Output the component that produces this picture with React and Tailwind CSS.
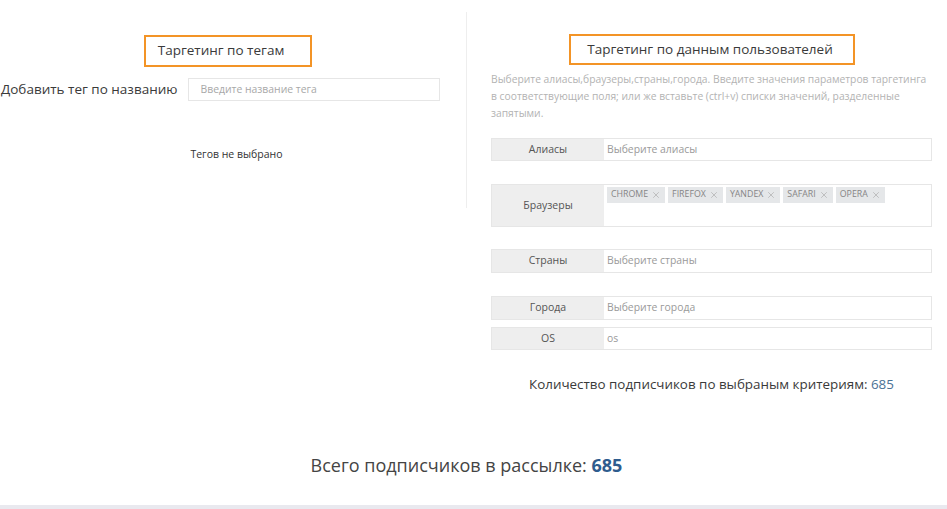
import { X } from "lucide-react";

const browsers = ["CHROME", "FIREFOX", "YANDEX", "SAFARI", "OPERA"];

function Row({ label, placeholder, className = "", children }) {
  return (
    <div className={`flex border border-[#e6e6e6] ${className}`}>
      <div className="flex w-[112px] shrink-0 items-center justify-center bg-[#eeeeee] text-[10.5px] text-[#555]">
        {label}
      </div>
      <div className="flex-1 bg-white">
        {children ?? (
          <div className="flex h-full items-center px-[3px] text-[10.4px] text-[#9a9a9a]">{placeholder}</div>
        )}
      </div>
    </div>
  );
}

export default function App() {
  return (
    <div className="relative h-[509px] w-[947px] overflow-hidden bg-white font-['Open_Sans',sans-serif] text-[#333]">
      <div className="flex">
        <div className="w-[467px] shrink-0 pt-[12px]">
          <div className="h-[196px] border-r border-[#eeeeee]">
            <div className="flex justify-center pr-[10px] pt-[23px]">
              <div className="h-[32px] border-2 border-[#f39426] pl-[12px] pr-[26px] text-[13.5px] leading-[27px] text-[#3a3a3a]">
                Таргетинг по тегам
              </div>
            </div>
            <div className="mt-[11px] flex items-center">
              <span className="pl-[1px] text-[13.5px] text-[#3a3a3a]">Добавить тег по названию</span>
              <div className="ml-[11px] flex h-[23px] w-[252px] items-center border border-[#e6e6e6] px-[11px] text-[10.4px] text-[#a8a8a8]">
                Введите название тега
              </div>
            </div>
            <div className="mt-[46px] pl-[7px] text-center text-[10.5px] text-[#333]">Тегов не выбрано</div>
          </div>
        </div>

        <div className="flex-1 pl-[24px] pr-[15px] pt-[34px]">
          <div className="flex justify-center pl-[1px]">
            <div className="h-[31px] border-2 border-[#f39426] pl-[16px] pr-[20px] text-[13.5px] leading-[26px] text-[#3a3a3a]">
              Таргетинг по данным пользователей
            </div>
          </div>
          <p className="mt-[6px] text-[10.3px] leading-[17px] text-[#b3b3b3]">
            Выберите алиасы,браузеры,страны,города. Введите значения параметров таргетинга в соответствующие поля; или же вставьте (ctrl+v) списки значений, разделенные запятыми.
          </p>
          <Row label="Алиасы" placeholder="Выберите алиасы" className="mt-[16px] h-[23px]" />
          <Row label="Браузеры" className="mt-[23px] h-[43px]">
            <div className="flex gap-[3px] pl-[3px] pt-[2px]">
              {browsers.map((b) => (
                <span
                  key={b}
                  className="flex h-[16px] items-center gap-[3px] bg-[#e5e7e9] px-[4px] text-[8.8px] text-[#858585]"
                >
                  {b}
                  <X className="h-[10px] w-[10px] text-[#ababab]" strokeWidth={1.6} />
                </span>
              ))}
            </div>
          </Row>
          <Row label="Страны" placeholder="Выберите страны" className="mt-[22px] h-[24px]" />
          <Row label="Города" placeholder="Выберите города" className="mt-[23px] h-[24px]" />
          <Row label="OS" placeholder="os" className="mt-[7px] h-[23px]" />
          <div className="mt-[24px] text-center text-[13.4px] text-[#3a3a3a]">
            Количество подписчиков по выбраным критериям: <span className="text-[#4a7295]">685</span>
          </div>
        </div>
      </div>

      <div className="mt-[58px] pr-[14px] text-center text-[18px] text-[#444]">
        Всего подписчиков в рассылке: <span className="font-bold text-[#2e5c8e]">685</span>
      </div>
      <div className="absolute bottom-0 left-0 h-[4px] w-full bg-[#e9e9ef]" />
    </div>
  );
}
